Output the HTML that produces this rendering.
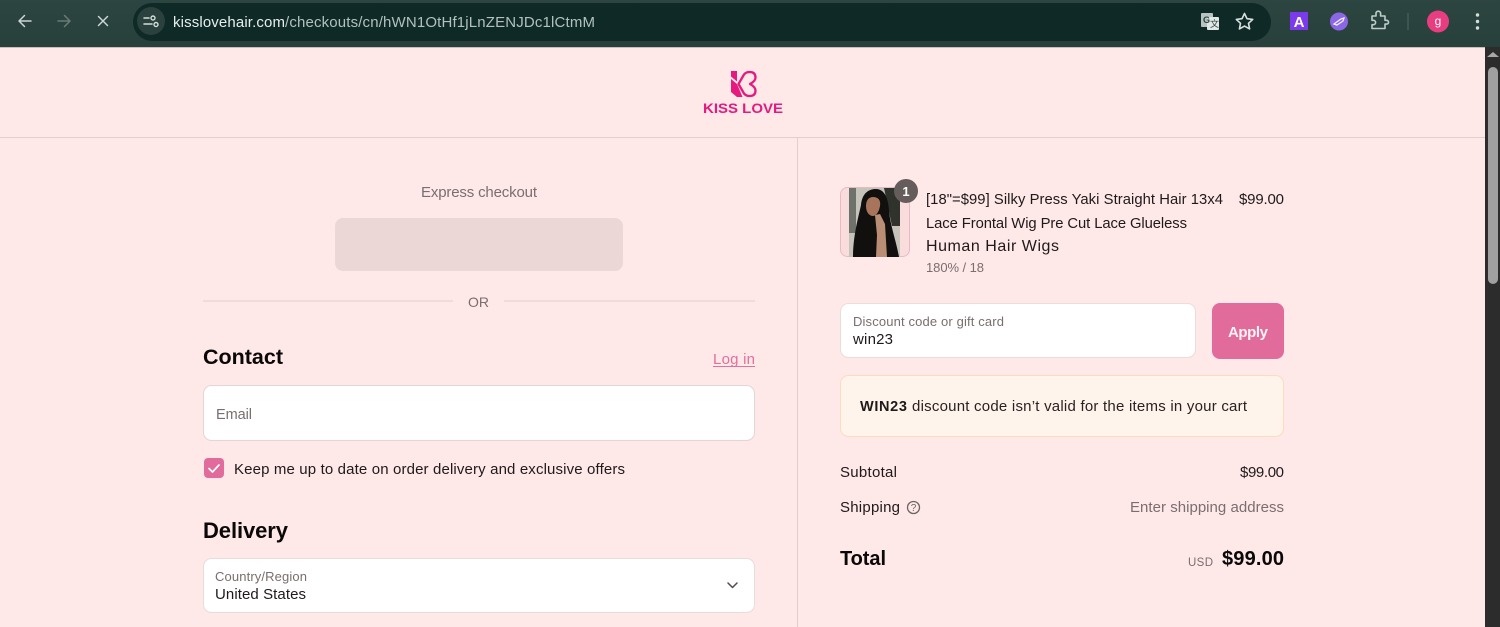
<!DOCTYPE html>
<html lang="en"><head><meta charset="utf-8"><title>Checkout</title>
<style>
html,body{margin:0;padding:0;width:1500px;height:627px;overflow:hidden;background:#fee8e8}
svg{display:block;position:absolute;left:0;top:0}
text{font-family:"Liberation Sans",sans-serif;font-size:15px;fill:#1f1a1a;white-space:pre}
.g{fill:#7a6e6e}.b{font-weight:700}.h{font-size:21.500px;font-weight:700;fill:#0a0808}.s{font-size:13px;fill:#7a6e6e}
</style></head><body>
<svg width="1500" height="627" viewBox="0 0 1500 627" xmlns="http://www.w3.org/2000/svg">
<defs>
<linearGradient id="bar" x1="0" y1="0" x2="0" y2="1"><stop offset="0" stop-color="#2d4540"/><stop offset="1" stop-color="#28403b"/></linearGradient>
<clipPath id="ph"><rect x="849" y="188" width="51" height="69"/></clipPath>
</defs>
<!-- chrome -->
<rect width="1500" height="47" fill="url(#bar)"/>
<rect y="47" width="1485" height="1" fill="#cdbcbc"/>
<rect x="133" y="3" width="1138" height="38" rx="19" fill="#0f2926"/>
<circle cx="151" cy="21" r="14" fill="#2a413d"/>
<g fill="none" stroke-linecap="round" stroke-linejoin="round">
<path d="M31 21H19M24.500 15.500L19 21l5.500 5.500" stroke="#c9d6d2" stroke-width="1.500"/>
<path d="M58 21h12M64.500 15.500L70 21l-5.500 5.500" stroke="#6a7b77" stroke-width="1.500"/>
<path d="M98.500 16.500l9 9M107.500 16.500l-9 9" stroke="#c9d6d2" stroke-width="1.500"/>
<path d="M144 18h5M152 24h-8" stroke="#d3dedb" stroke-width="1.500"/>
<circle cx="153" cy="18" r="2" stroke="#d3dedb" stroke-width="1.400"/>
<circle cx="156" cy="24.500" r="2" stroke="#d3dedb" stroke-width="1.400"/>
<path d="M1244.500 13.500l2.500 5.200 5.700.7-4.200 3.900 1.100 5.600-5.100-2.800-5.100 2.800 1.100-5.600-4.200-3.900 5.700-.7z" stroke="#d7e2df" stroke-width="1.600"/>
<path d="M1372 16h4v-2.500a2.300 2.300 0 0 1 4.600 0V16h4.400v4.300h1.600a1.900 1.900 0 0 1 0 3.800H1385v4.400h-13v-3.800h1.400a2.200 2.200 0 0 0 0-4.400H1372z" stroke="#bccdc8" stroke-width="1.600"/>
</g>
<rect x="1201" y="13" width="12" height="14" rx="1" fill="#b8c4c1"/>
<rect x="1207" y="17" width="12" height="13" rx="1" fill="#e1e8e6"/>
<rect x="1290" y="12" width="18" height="18" fill="#7c3aed"/>
<circle cx="1339" cy="21.500" r="9" fill="#8b67e6"/>
<path d="M1334 24l7-5 3-1-1 3-6 4z" fill="none" stroke="#f1ecff" stroke-width="1.300"/>
<rect x="1407.500" y="13" width="1" height="17" fill="#506661"/>
<circle cx="1438" cy="21.500" r="11" fill="#e93d82"/>
<circle cx="1477.500" cy="15" r="1.700" fill="#d3dedb"/><circle cx="1477.500" cy="21.500" r="1.700" fill="#d3dedb"/><circle cx="1477.500" cy="28" r="1.700" fill="#d3dedb"/>

<text x="173" y="27" textLength="112" style="fill:#e7efed;font-size:15px">kisslovehair.com</text>
<text x="285" y="27" textLength="310" style="fill:#b1c1bd;font-size:15px">/checkouts/cn/hWN1OtHf1jLnZENJDc1lCtmM</text>
<text x="1299" y="27" text-anchor="middle" class="b" style="fill:#fff;font-size:15px">A</text>
<text x="1438" y="25" text-anchor="middle" style="fill:#fff;font-size:12px">g</text>
<text x="1203" y="23" style="fill:#2c403c;font-size:9px;font-weight:700">G</text>
<text x="1210" y="27" style="fill:#2c403c;font-size:9px;font-family:'Liberation Sans','Noto Sans CJK SC',sans-serif">文</text>

<!-- scrollbar -->
<rect x="1485" y="47" width="15" height="580" fill="#2c2c2c"/>
<path d="M1493 52l6 5h-12z" fill="#a8a8a8"/>
<rect x="1488" y="67" width="10" height="217" rx="5" fill="#a0a0a0"/>

<!-- page lines -->
<rect y="137" width="1485" height="1" fill="#e5cdcd"/>
<rect x="797" y="138" width="1" height="489" fill="#e5cdcd"/>

<!-- logo -->
<path d="M731 71h6v10.500l-6-5zM731 79l6 5 5.500 13H737l-6-5z" fill="#e6197f"/>
<path d="M738.500 84L744 74.500Q746 72 749.500 72Q755.500 72 755.500 77.500Q755.500 81 750 84Q755.500 87 755.500 90.500Q755.500 96 749.500 96Q746 96 744 93.500Z" fill="none" stroke="#e6197f" stroke-width="2.300" stroke-linejoin="round"/>
<text x="703" y="113" textLength="80" lengthAdjust="spacingAndGlyphs" class="b" style="fill:#e6197f;font-size:13.500px">KISS LOVE</text>

<!-- left column -->
<text x="421" y="197" textLength="116" class="g">Express checkout</text>
<rect x="335" y="218" width="288" height="53" rx="8" fill="#ecd7d7"/>
<rect x="203" y="300.500" width="250" height="1" fill="#e3cbcb"/>
<rect x="504" y="300.500" width="251" height="1" fill="#e3cbcb"/>
<text x="468" y="307" textLength="21" class="g" style="font-size:14px">OR</text>
<text x="203" y="364" textLength="80" class="h">Contact</text>
<text x="713" y="364" textLength="42" style="fill:#e0709e">Log in</text>
<rect x="713" y="366" width="42" height="1" fill="#e0709e"/>
<rect x="203.500" y="385.500" width="551" height="55" rx="8" fill="#fff" stroke="#e5d5d5"/>
<text x="216" y="419" textLength="36" class="g" style="font-size:14.500px">Email</text>
<rect x="204" y="458" width="20" height="20" rx="4" fill="#e16b9b"/>
<path d="M209 468.500l3.500 3.500 6.500-7" fill="none" stroke="#fff" stroke-width="1.700" stroke-linecap="round" stroke-linejoin="round"/>
<text x="234" y="474" textLength="391">Keep me up to date on order delivery and exclusive offers</text>
<text x="203" y="538" textLength="85" class="h" style="font-size:22px">Delivery</text>
<rect x="203.500" y="558.500" width="551" height="54" rx="8" fill="#fff" stroke="#e9dcdc"/>
<text x="215" y="581" textLength="92" class="s">Country/Region</text>
<text x="215" y="599" textLength="91">United States</text>
<path d="M728 583l4.500 4.500 4.500-4.500" fill="none" stroke="#55494a" stroke-width="1.500" stroke-linecap="round" stroke-linejoin="round"/>

<!-- product -->
<rect x="840.500" y="187.500" width="69" height="69" rx="7" fill="#f9dcdc" stroke="#eab9c3"/>
<g clip-path="url(#ph)">
<rect x="849" y="188" width="51" height="69" fill="#c6c3ba"/>
<rect x="849" y="188" width="7" height="45" fill="#6f716b"/>
<path d="M884 188h16v38h-8z" fill="#2f332c"/>
<path d="M853 257C853 235 859 215 861 205C862 194 868 189 876 189C884 189 888 197 889 210C890 225 896 240 899 257Z" fill="#12100f"/>
<path d="M866 206c0-6 3-9 7-9 5 0 8 3 7 9-1 6-4 10-7 10-4 0-7-4-7-10z" fill="#a8755c"/>
<path d="M875 215l5-1 5 10 2 33h-11l1-22z" fill="#b98e74"/>
</g>
<circle cx="906" cy="191" r="12" fill="#655c5c"/>
<text x="906" y="196" text-anchor="middle" class="b" style="fill:#fff;font-size:13px">1</text>
<text x="926" y="204" textLength="297" style="font-size:14.800px">[18"=$99] Silky Press Yaki Straight Hair 13x4</text>
<text x="926" y="228" textLength="261" style="font-size:14.800px">Lace Frontal Wig Pre Cut Lace Glueless</text>
<text x="926" y="251" textLength="133" style="font-size:16px">Human Hair Wigs</text>
<text x="926" y="272" textLength="58" class="s">180% / 18</text>
<text x="1239" y="204" textLength="45">$99.00</text>

<!-- discount -->
<rect x="840.500" y="303.500" width="355" height="54" rx="8" fill="#fff" stroke="#ecdcdc"/>
<text x="853" y="326" textLength="151" class="s">Discount code or gift card</text>
<text x="853" y="344" textLength="40">win23</text>
<rect x="1212" y="303" width="72" height="56" rx="8" fill="#e16b9b"/>
<text x="1228" y="337" textLength="40" class="b" style="fill:#fff3f6;font-size:15px">Apply</text>
<rect x="840.500" y="375.500" width="443" height="61" rx="8" fill="#fff4eb" stroke="#fbdcc0"/>
<text x="860" y="411" textLength="47" class="b" style="font-size:14.500px">WIN23</text>
<text x="912" y="411" textLength="335" style="fill:#2a2222">discount code isn’t valid for the items in your cart</text>

<!-- totals -->
<text x="840" y="477" textLength="57">Subtotal</text>
<text x="1240" y="477" textLength="44">$99.00</text>
<text x="840" y="512" textLength="60">Shipping</text>
<circle cx="913.500" cy="507.500" r="6" fill="none" stroke="#6f6464" stroke-width="1.300"/>
<text x="913.500" y="511" text-anchor="middle" style="fill:#6f6464;font-size:10px">?</text>
<text x="1130" y="512" textLength="154" class="g">Enter shipping address</text>
<text x="840" y="565" textLength="46" class="b" style="font-size:20px;fill:#0a0808">Total</text>
<text x="1188" y="566" textLength="25" class="s" style="font-size:11.500px">USD</text>
<text x="1222" y="565" textLength="62" class="b" style="font-size:20px;fill:#0a0808">$99.00</text>
</svg>
</body></html>
